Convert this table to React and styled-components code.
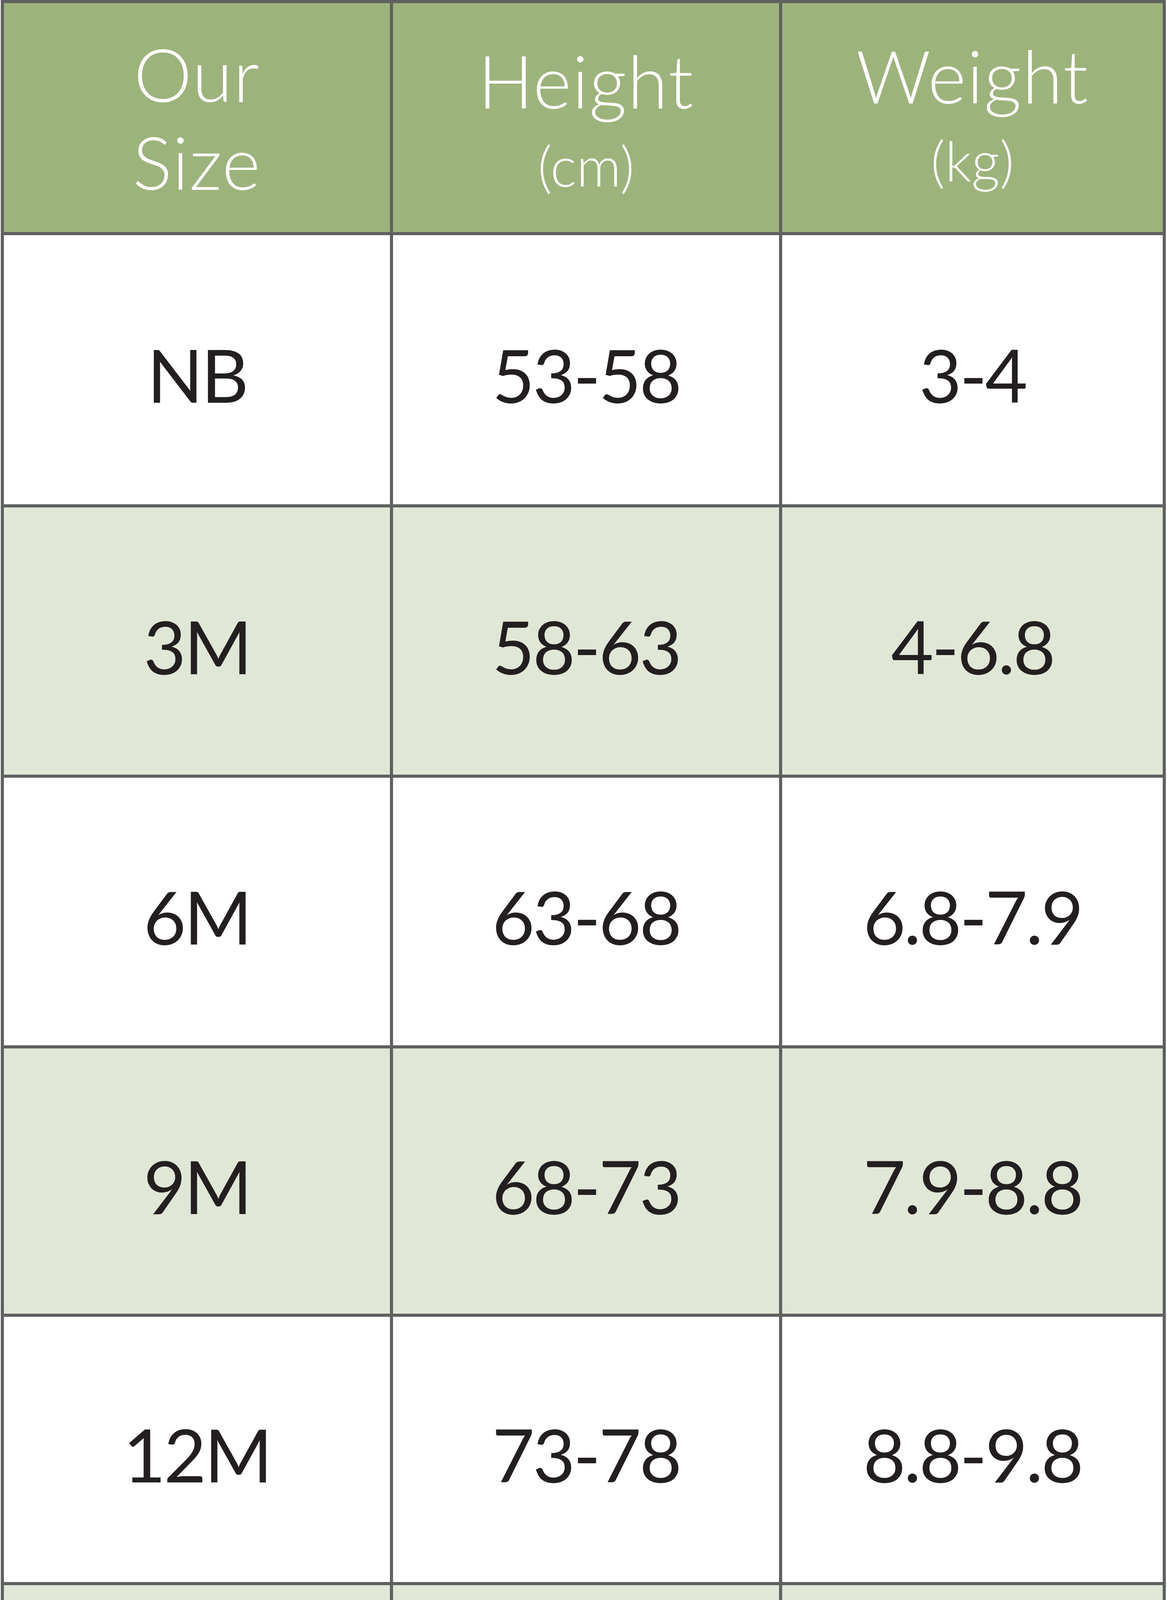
import React from 'react';
import styled, { createGlobalStyle } from 'styled-components';

const GlobalStyle = createGlobalStyle`
  html, body {
    margin: 0;
    padding: 0;
    background: #ffffff;
  }
`;

const rows = [
  ['NB', '53-58', '3-4'],
  ['3M', '58-63', '4-6.8'],
  ['6M', '63-68', '6.8-7.9'],
  ['9M', '68-73', '7.9-8.8'],
  ['12M', '73-78', '8.8-9.8'],
  ['18M', '78-85', '9.8-10.7'],
  ['24M', '85-92', '10.7-11.6'],
];

const SizeChart = () => {
  return (
    <Table>
      <HeadCell>
        <HeadLine>Our</HeadLine>
        <HeadLine>Size</HeadLine>
      </HeadCell>
      <HeadCell $top={20}>
        <HeadLine>Height</HeadLine>
        <Unit>(cm)</Unit>
      </HeadCell>
      <HeadCell $bottom={6}>
        <HeadLine>Weight</HeadLine>
        <Unit>(kg)</Unit>
      </HeadCell>

      {rows.map((row, i) =>
        row.map((value, j) => (
          <Cell key={`${i}-${j}`} $alt={i % 2 === 1}>
            {value}
          </Cell>
        ))
      )}
    </Table>
  );
};

const Table = styled.div`
  display: grid;
  grid-template-columns: 988px 988px 974px;
  grid-template-rows: 586px 689px 684px 685px 679px 679px 696px 698px;
  gap: 8px;
  padding: 8px;
  margin-left: 2px;
  width: fit-content;
  background: #5f6160;
  font-family: "Lato", "Noto Sans", sans-serif;
`;

const HeadCell = styled.div`
  display: flex;
  flex-direction: column;
  align-items: center;
  justify-content: center;
  padding-top: ${(p) => p.$top || 0}px;
  padding-bottom: ${(p) => p.$bottom || 0}px;
  background: #9db37c;
  color: #ffffff;
  overflow: hidden;
`;

const HeadLine = styled.div`
  font-size: 188px;
  font-weight: 300;
  line-height: 225px;
  letter-spacing: 2px;
`;

const Unit = styled.div`
  font-size: 142px;
  font-weight: 300;
  line-height: 211px;
`;

const Cell = styled.div`
  display: flex;
  align-items: center;
  justify-content: center;
  padding-top: 24px;
  background: ${(p) => (p.$alt ? '#e1e7d7' : '#ffffff')};
  color: #231f20;
  font-size: 188px;
  font-weight: 400;
  line-height: 225px;
  letter-spacing: -5px;
  overflow: hidden;
`;

const App = () => (
  <>
    <GlobalStyle />
    <SizeChart />
  </>
);

export default App;
